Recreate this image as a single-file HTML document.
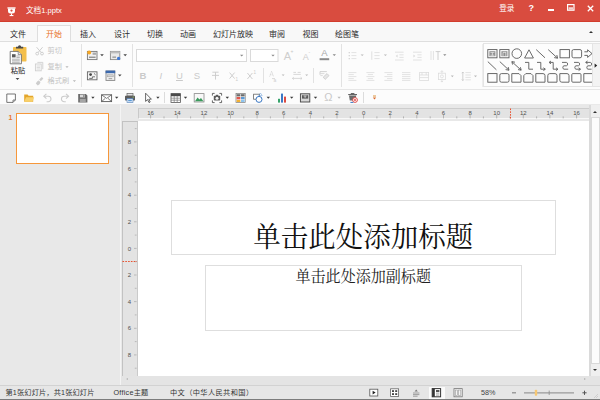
<!DOCTYPE html>
<html lang="zh-CN">
<head>
<meta charset="utf-8">
<title>文档1.pptx</title>
<style>
html,body{margin:0;padding:0;}
body{width:600px;height:400px;overflow:hidden;position:relative;background:#e9e9e9;
 font-family:"Liberation Sans","Noto Sans CJK SC",sans-serif;font-size:7.2px;color:#333;}
.a{position:absolute;}
.t{position:absolute;white-space:nowrap;line-height:10px;height:10px;}
svg{position:absolute;overflow:visible;}
/* title bar */
#titlebar{left:0;top:0;width:600px;height:22px;background:#d94c3f;border-bottom:1px solid #d23d2d;box-sizing:border-box;}
#titlebar .t{color:#fff;}
/* tab row */
#tabrow{left:0;top:22px;width:600px;height:20px;background:#f8f8f8;border-bottom:1px solid #dedede;box-sizing:border-box;}
.tab{position:absolute;top:29.300px;font-size:8px;line-height:12px;height:12px;color:#2b2b2b;white-space:nowrap;}
#acttab{left:37px;top:25px;width:34px;height:17px;background:#fcfcfc;border:1px solid #dedede;border-bottom:none;box-sizing:border-box;}
/* ribbon */
#ribbon{left:0;top:42px;width:600px;height:47px;background:#fcfcfc;}
.vsep{position:absolute;width:1px;background:#e2e2e2;}
.dis{color:#c4c4c4;}
.arr{position:absolute;width:0;height:0;border-left:2px solid transparent;border-right:2px solid transparent;border-top:2px solid #555;}
.arr.l{border-top-color:#c8c8c8;}
/* toolbar */
#toolbar{left:0;top:89px;width:600px;height:16px;background:#fcfcfc;border-top:1px solid #e6e6e6;border-bottom:1px solid #e9e9e9;box-sizing:border-box;}
/* workspace */
#left{left:0;top:105px;width:120px;height:280px;background:#e8e8e8;}
#work{left:121px;top:105px;width:479px;height:280px;background:#e8e8e8;}
#status{left:0;top:385px;width:600px;height:15px;background:#e6e6e6;border-top:1px solid #d2d2d2;box-sizing:border-box;}
</style>
</head>
<body>

<!-- ================= TITLE BAR ================= -->
<div id="titlebar" class="a">
  <svg style="left:7px;top:6.5px" width="9" height="10" viewBox="0 0 9 10">
    <rect x="0.4" y="0.3" width="8.2" height="1.3" fill="#fff"/>
    <path d="M1 1.600h7v2.600a2.400 2.400 0 0 1-2.400 2.400h-2.200a2.400 2.400 0 0 1-2.400-2.400z" fill="#fff"/>
    <circle cx="4.500" cy="3.600" r="1.100" fill="#d94c3f"/>
    <rect x="4" y="6.400" width="1" height="1.800" fill="#fff"/>
    <rect x="2.600" y="8" width="3.800" height="1.100" fill="#fff"/>
  </svg>
  <div class="t" style="left:26px;top:6px;font-size:7.6px;">文档1.pptx</div>
  <div class="t" style="left:499.200px;top:3.600px;font-size:7.600px;">登录</div>
  <div class="t" style="left:528.5px;top:2.5px;font-size:9px;font-weight:bold;">?</div>
  <div class="a" style="left:548px;top:9px;width:6px;height:1.6px;background:#fff;"></div>
  <svg style="left:567px;top:4px" width="8" height="7" viewBox="0 0 8 7">
    <rect x="0.6" y="0.6" width="6.4" height="5.6" fill="none" stroke="#fff" stroke-width="1.2"/>
    <rect x="1.6" y="3.2" width="4.4" height="2.4" fill="#fff" opacity=".75"/>
  </svg>
  <svg style="left:587px;top:4.5px" width="7" height="7" viewBox="0 0 7 7">
    <path d="M0.8 0.8L6.2 6.2M6.2 0.8L0.8 6.2" stroke="#fff" stroke-width="1.3" fill="none"/>
  </svg>
</div>

<!-- ================= TAB ROW ================= -->
<div id="tabrow" class="a"></div>
<div id="acttab" class="a"></div>
<div class="tab" style="left:10px;">文件</div>
<div class="tab" style="left:46px;color:#e8742a;">开始</div>
<div class="tab" style="left:80px;">插入</div>
<div class="tab" style="left:114px;">设计</div>
<div class="tab" style="left:147px;">切换</div>
<div class="tab" style="left:180px;">动画</div>
<div class="tab" style="left:213px;">幻灯片放映</div>
<div class="tab" style="left:269px;">审阅</div>
<div class="tab" style="left:302.5px;">视图</div>
<div class="tab" style="left:335px;">绘图笔</div>
<div class="a" style="left:588.5px;top:30.5px;width:0;height:0;border-left:2.5px solid transparent;border-right:2.5px solid transparent;border-bottom:2.5px solid #333;"></div>

<!-- ================= RIBBON ================= -->
<div id="ribbon" class="a"></div>
<!--RIBBON-START-->
<svg style="left:0;top:41px" width="600" height="48" viewBox="0 41 600 48">
  <!-- paste icon -->
  <rect x="13" y="47" width="13.5" height="14.5" rx="0.8" fill="#f3bf4c"/>
  <path d="M16 48.6v-1.8h2a1.6 1.6 0 0 1 3.2 0h2v1.8z" fill="#4a4a4a"/>
  <path d="M10.2 51.4h8l3.2 3.2v9.2H10.2z" fill="#fff" stroke="#6e6e6e" stroke-width="0.9"/>
  <path d="M18.2 51.4v3.2h3.2" fill="#e9e9e9" stroke="#6e6e6e" stroke-width="0.7"/>
  <rect x="12" y="54.2" width="3.6" height="3.2" fill="#5a5a5a"/>
  <path d="M16.4 56h3.4M16.4 57.6h3.4M12 59.2h7.8M12 60.8h7.8M12 62.3h7.8" stroke="#9a9a9a" stroke-width="0.8"/>
  <!-- scissors (disabled) -->
  <g stroke="#c9c9c9" stroke-width="0.9" fill="none">
    <path d="M36.6 47.2l4.6 5.4M42.6 47.2l-4.6 5.4"/>
    <circle cx="37.2" cy="53.6" r="1.4"/><circle cx="42" cy="53.6" r="1.4"/>
  </g>
  <!-- copy (disabled) -->
  <g stroke="#cfcfcf" stroke-width="0.9" fill="#fbfbfb">
    <path d="M37.4 62.4h5.4v6.8"/>
    <rect x="35.4" y="64" width="5.8" height="6.8"/>
    <path d="M36.6 66h3.4M36.6 67.5h3.4M36.6 69h3.4" stroke-width="0.7"/>
  </g>
  <!-- format brush (disabled) -->
  <g fill="#cdcdcd">
    <path d="M41.8 77l1.6 1.6-2.6 2.6-1.6-1.6z"/>
    <path d="M38.6 80.2l2 2-1 1 .6.6-2.4 1.6-2-2 1.6-2.4.6.6z"/>
  </g>
  <!-- new slide -->
  <rect x="87.4" y="51.4" width="9.6" height="8.2" fill="#f1f1f1" stroke="#777" stroke-width="0.9"/>
  <rect x="92.6" y="52.6" width="3.4" height="2.2" fill="#a9a9a9"/>
  <rect x="89" y="56.6" width="6.6" height="1.3" fill="#8a8a8a"/>
  <circle cx="89.2" cy="52.6" r="2" fill="#f6a724"/>
  <!-- layout -->
  <rect x="110.4" y="51.4" width="9.4" height="8.2" fill="#e9e9e9" stroke="#8a8a8a" stroke-width="0.9"/>
  <rect x="110.4" y="51.4" width="9.4" height="2" fill="#bdbdbd"/>
  <rect x="112.4" y="56.4" width="3.6" height="1.6" fill="#a5a5a5"/>
  <circle cx="118.6" cy="58.4" r="1.6" fill="#3d78d6"/>
  <!-- section / reset -->
  <rect x="87.4" y="71.8" width="9.6" height="8" fill="#f3f3f3" stroke="#666" stroke-width="0.9"/>
  <circle cx="90.6" cy="74.6" r="1.4" fill="#444"/>
  <path d="M89.2 78.4h3.2v-1.6h2.6M94 73.4l1.6 1.4" stroke="#555" stroke-width="0.8" fill="none"/>
  <!-- slide w/ blue header -->
  <rect x="106" y="71" width="8.8" height="9.4" fill="#f0f0f0" stroke="#888" stroke-width="0.9"/>
  <rect x="105.6" y="70.6" width="9.6" height="2.6" fill="#3c69ad"/>
  <rect x="107.6" y="74.8" width="5.6" height="2" fill="#d4d4d4" stroke="#999" stroke-width="0.5"/>
  <rect x="108.6" y="78" width="3.6" height="1.2" fill="#aaa"/>
  <!-- combo boxes -->
  <rect x="136.5" y="49.5" width="110" height="12" fill="#fff" stroke="#dadada" stroke-width="1"/>
  <rect x="250.5" y="49.5" width="27.5" height="12" fill="#fff" stroke="#dadada" stroke-width="1"/>
  <path d="M240 54.8h3.4l-1.7 1.8zM271.3 54.8h3.4l-1.7 1.8z" fill="#8c8c8c"/>
  <!-- strike T -->
  <g stroke="#c9c9c9" stroke-width="0.9" fill="none">
    <path d="M212.4 72.2h6.2M215.5 72.2v7.4M212 75.4h7"/>
    <!-- X sub / sup -->
    <path d="M229.6 72.6l5 6M234.6 72.6l-5 6"/>
    <path d="M247.4 73l5 6M252.4 73l-5 6"/>
  </g>
  <!-- A aa change case -->
  <g stroke="#cfcfcf" stroke-width="0.8" fill="none">
    <path d="M269.6 76.6l2-5.4 2 5.4M270.4 74.8h2.4" stroke-dasharray="1 .6"/>
    <path d="M272 78.6h3"/>
  </g>
  <!-- char spacing -->
  <g stroke="#cfcfcf" stroke-width="0.8" fill="none">
    <path d="M293.4 72.4h2.6M297.6 72.4h3M293.4 74.4h7.4" />
    <path d="M292.4 78.4h9.6M292.4 78.4l1.4-1.2M292.4 78.4l1.4 1.2M302 78.4l-1.4-1.2M302 78.4l-1.4 1.2"/>
  </g>
  <!-- eraser / clear format -->
  <g stroke="#cdcdcd" stroke-width="0.9" fill="none">
    <path d="M320 74.8v-3.2h6.8"/>
    <path d="M320.4 73.6h4M320.4 75.6h2.4" stroke-width="0.7"/>
    <path d="M323.2 77.2l3.8-3.6 2 2-3.8 3.8z" fill="#e6e6e6"/>
  </g>
  <!-- font color bar -->
  <rect x="319.6" y="58.2" width="9.6" height="2" fill="#8a8a8a"/>
  <!-- paragraph row1 : bullets -->
  <g stroke="#dcdcdc" stroke-width="0.8" fill="none">
    <path d="M351.4 52.6h5M351.4 55.6h5M351.4 58.6h5"/>
    <path d="M374.4 52.6h5.2M374.4 55.6h5.2M374.4 58.6h5.2"/>
    <path d="M371.8 51.4v8.4" stroke-width="0.9"/>
    <!-- indent dec / inc -->
    <path d="M395 52.200h8.600M399.400 54.800h4.200M399.400 57.400h4.200M395 60h8.600"/><path d="M397.600 54.600l-2 1.500 2 1.500z" fill="#dcdcdc" stroke="none"/>
    <path d="M413 52.200h8.600M417.400 54.800h4.200M417.400 57.400h4.200M413 60h8.600"/><path d="M413.400 54.600l2 1.500-2 1.500z" fill="#dcdcdc" stroke="none"/>
    <!-- text direction -->
    <path d="M431 51v9M433.4 51v9" />
    <path d="M435.6 51.6h4.8M438 51.6v8.4" stroke="#c4c4c4"/>
    <!-- align row -->
    <path d="M348.4 72.6h8M348.4 74.6h5.4M348.4 76.6h8M348.4 78.6h5.4M348.4 80.4h8"/>
    <path d="M366.4 72.6h8M367.8 74.6h5.2M366.4 76.6h8M367.8 78.6h5.2M366.4 80.4h8"/>
    <path d="M384.4 72.6h8M387 74.6h5.4M384.4 76.6h8M387 78.6h5.4M384.4 80.4h8"/>
    <path d="M402 72.6h8.4M402 74.6h8.4M402 76.6h8.4M402 78.6h8.4M402 80.4h8.4"/>
    <rect x="419.6" y="72.4" width="9" height="8"/>
    <path d="M419.6 75h9M419.6 77.6h9M422 72.4v2.6M426.2 72.4v2.6"/>
    <!-- vertical align -->
    <rect x="438.4" y="73.200" width="7" height="6.400"/>
    <circle cx="441.900" cy="76.400" r="1.500"/>
    <path d="M441.900 70.800v2.400M441.900 79.600v2.400M440.700 71.900l1.200-1.200 1.200 1.200M440.700 80.900l1.200 1.200 1.200-1.200"/>
    <!-- line spacing -->
    <path d="M465.4 72.6h5.4M465.4 75h5.4M465.4 77.4h5.4M465.4 79.8h5.4"/>
    <path d="M462.8 72v8.6M461.8 73.2l1-1.2 1 1.2M461.8 79.4l1 1.2 1-1.2" stroke="#c8c8c8"/>
  </g>
  <g fill="#d8d8d8">
    <rect x="348.6" y="52" width="1.4" height="1.3"/><rect x="348.6" y="55" width="1.4" height="1.3"/><rect x="348.6" y="58" width="1.4" height="1.3"/>
    
  </g>
  <!-- small drop arrows -->
    <g fill="#4a4a4a">
    <path d="M15.6 78h3.8l-1.9 2.1z"/>
    <path d="M100.2 54.2h3.6l-1.8 2zM123.4 54.2h3.6l-1.8 2zM118 74.4h3.6l-1.8 2z"/>
  </g>
  <g fill="#8a8a8a">
    <path d="M332.6 54.2h3.4l-1.7 1.9z"/>
    <path d="M443.2 54.2h3.2l-1.6 1.8z"/>
  </g>
  <g fill="#b9b9b9">
    <path d="M65.4 66.2h3.2l-1.6 1.7zM72.8 80.2h3.2l-1.6 1.7z"/>
    <path d="M281.6 74.4h3l-1.5 1.6zM305.2 74.4h3l-1.5 1.6z"/>
    <path d="M360.6 54.4h3.2l-1.6 1.7zM383.8 54.4h3.2l-1.6 1.7z"/>
    <path d="M450.8 75.6h3l-1.5 1.6zM474 75.6h3l-1.5 1.6z"/>
  </g>
  <!-- shapes gallery -->
  <rect x="483.5" y="43.5" width="109" height="43" fill="#fdfdfd" stroke="#e4e4e4" stroke-width="1"/>
  <rect x="592.5" y="43.5" width="8" height="43" fill="#f3f3f3" stroke="#e4e4e4" stroke-width="1"/>
  <path d="M594.6 63.4l2.6 2.2-2.6 2.2z" fill="#222"/>
  <g stroke="#5a5a5a" stroke-width="0.9" fill="none">
    <!-- row1 -->
    <rect x="487.8" y="49.6" width="9.2" height="8.2"/>
    <rect x="499.8" y="49.6" width="9.2" height="8.2"/>
    <circle cx="516.8" cy="53.6" r="4.8"/>
    <path d="M524.6 58l4.4-8.2 4.4 8.2z"/>
    <path d="M536.2 49.6l8.8 8.2"/>
    <path d="M548.2 49.6l9.2 8.4M557.6 58.2l-3.4-.6M557.6 58.2l-.8-3.2"/>
    <rect x="560" y="49.6" width="9.4" height="8.2"/>
    <rect x="572" y="49.6" width="9.6" height="8.2" rx="1.6"/>
    <path d="M592 51.8h-3.2v-2l-4.4 3.8 4.4 3.8v-2h3.2" transform="translate(1176.4 0) scale(-1 1)"/>
    <!-- row2 -->
    <path d="M487.8 61.6l8.6 8.2"/>
    <path d="M499.8 61.6l9 8.4M509 70.2l-3.4-.6M509 70.2l-.8-3.2"/>
    <path d="M512 61.8l9 8.2M521.2 70.2l-3.2-.6M521.2 70.2l-.8-3M511.8 61.6l3.2.6M511.8 61.6l.8 3"/>
    <path d="M525 62.4h3.8v6.8h4.2"/>
    <path d="M537 62.4h3.8v6.8h4.2M545.4 69.2l-2-1.4M545.4 69.2l-2 1.4"/>
    <path d="M549.6 62.4h3.6v6.8h4.2M558 69.2l-2-1.4M558 69.2l-2 1.4M549 62.4l2-1.4M549 62.4l2 1.4"/>
    <path d="M562 62.4h4.4c1.6 0 1.6 3.4 0 3.4h-2.4c-1.6 0-1.6 3.4 0 3.4h4.2"/>
    <path d="M574 62.4h4.4c1.6 0 1.6 3.4 0 3.4h-2.4c-1.6 0-1.6 3.4 0 3.4h4.2M580.6 69.2l-2-1.4M580.6 69.2l-2 1.4"/>
    <path d="M586 62.4h4.4c1.6 0 1.6 3.4 0 3.4h-2.4c-1.6 0-1.6 3.4 0 3.4h3.6M585.6 62.4l2-1.4M585.6 62.4l2 1.4"/>
    <!-- row3 -->
    <rect x="487.8" y="73.6" width="9.2" height="8.6"/>
    <rect x="499.8" y="73.6" width="9.2" height="8.6" rx="1.6"/>
    <path d="M511.8 73.6h7.2l2 2v6.600h-9.200z"/>
    <path d="M525.800 73.600h5.200l2 2v6.600h-9.200v-6.600z"/>
    <path d="M535.800 73.600h7.200a2 2 0 0 1 2 2v6.600h-9.200z"/>
    <path d="M549.800 73.600h5.200a2 2 0 0 1 2 2v6.600h-9.200v-6.600a2 2 0 0 1 2-2z"/>
    <path d="M559.800 73.600h7.200a2 2 0 0 1 2 2v6.600h-7.200a2 2 0 0 1 -2-2z"/>
    <rect x="571.8" y="73.600" width="9.200" height="8.600" rx="1"/>
    <path d="M592 73.600h-8.200v8.600h8.200"/>
  </g>
  <g fill="#8e8e8e">
    <rect x="489.400" y="51.200" width="6" height="5"/>
    <rect x="501.400" y="51.200" width="6" height="5"/>
  </g>
  <path d="M490.400 52.600h4M492.400 52.600v2.800M490.400 55.200h4" stroke="#fff" stroke-width="0.600" fill="none"/>
  <path d="M503 52.400v3.600M503 52.400h3.200M505.800 52.400v3.600" stroke="#fff" stroke-width="0.600" fill="none"/>
</svg>
<div class="vsep" style="left:81px;top:44px;height:43px;"></div>
<div class="vsep" style="left:132px;top:44px;height:43px;"></div>
<div class="vsep" style="left:262.500px;top:68px;height:15px;"></div>
<div class="vsep" style="left:313px;top:68px;height:15px;"></div>
<div class="vsep" style="left:340.500px;top:44px;height:43px;"></div>
<div class="vsep" style="left:482px;top:44px;height:43px;background:#ededed;"></div>
<div class="t" style="left:10.800px;top:65.500px;color:#222;">粘贴</div>
<div class="t dis" style="left:47.500px;top:46.200px;">剪切</div>
<div class="t dis" style="left:47.500px;top:62px;">复制</div>
<div class="t dis" style="left:47.500px;top:76px;">格式刷</div>
<div class="t" style="left:139.500px;top:70.500px;font-size:9.500px;font-weight:bold;color:#cacaca;">B</div>
<div class="t" style="left:159.500px;top:70.500px;font-size:9.500px;font-style:italic;color:#cacaca;">I</div>
<div class="t" style="left:176px;top:70.500px;font-size:9.500px;color:#cacaca;text-decoration:underline;">U</div>
<div class="t" style="left:193.800px;top:70.500px;font-size:9.500px;color:#cacaca;">S</div>
<div class="t" style="left:235.500px;top:75px;font-size:4.500px;color:#cacaca;">1</div>
<div class="t" style="left:253.500px;top:67.500px;font-size:4.500px;color:#cacaca;">1</div>
<div class="t" style="left:273.400px;top:74.500px;font-size:5px;color:#cfcfcf;">a</div>
<div class="t" style="left:283.800px;top:50.500px;font-size:11px;color:#cecece;">A</div>
<div class="t" style="left:290.600px;top:46.400px;font-size:5px;color:#c6c6c6;">+</div>
<div class="t" style="left:302.800px;top:51.500px;font-size:9px;color:#cecece;">A</div>
<div class="t" style="left:308.600px;top:47.400px;font-size:5px;color:#c6c6c6;">-</div>
<div class="t" style="left:321.200px;top:48.400px;font-size:9.500px;color:#a8a8a8;">A</div>
<!--RIBBON-END-->

<!-- ================= QUICK TOOLBAR ================= -->
<div id="toolbar" class="a"></div>
<!--TOOLBAR-START-->
<svg style="left:0;top:89px" width="600" height="17" viewBox="0 89 600 17">
  <!-- new -->
  <path d="M6.800 94h8.600v6l-2.400 2.400h-6.200z" fill="#fff" stroke="#666" stroke-width="0.900"/>
  <path d="M15.400 100h-2.400v2.400" fill="none" stroke="#666" stroke-width="0.800"/>
  <!-- open folder -->
  <path d="M24.200 101.800v-7.200h3.400l1 1.200h4.600v6z" fill="#e3a52a"/>
  <path d="M24.200 101.800l1.800-4.600h8.200l-1.800 4.600z" fill="#f8d06a"/>
  <!-- undo / redo (disabled) -->
  <g stroke="#cbcbcb" stroke-width="1.100" fill="none">
    <path d="M44.200 96.200h4a2.800 2.800 0 0 1 0 5.600h-1.600"/>
    <path d="M46.400 93.800l-2.600 2.400 2.600 2.400"/>
    <path d="M68.200 96.200h-4a2.800 2.800 0 0 0 0 5.600h1.600"/>
    <path d="M66 93.800l2.600 2.400-2.600 2.400"/>
  </g>
  <!-- save -->
  <path d="M78.200 94h7.600l1.600 1.600v6.800h-9.200z" fill="#6b6b6b"/>
  <rect x="80" y="94.600" width="5" height="2.800" fill="#d9d9d9"/>
  <rect x="83.400" y="95" width="1" height="2" fill="#6b6b6b"/>
  <rect x="79.800" y="98.800" width="6" height="3.200" fill="#a5a5a5"/>
  <!-- envelope -->
  <rect x="101.600" y="94.800" width="10" height="6.800" fill="#fff" stroke="#5a5a5a" stroke-width="0.900"/>
  <path d="M101.600 94.800l5 3.600 5-3.600M101.600 101.600l3.600-3.200M111.600 101.600l-3.600-3.200" fill="none" stroke="#5a5a5a" stroke-width="0.800"/>
  <!-- printer -->
  <rect x="127" y="93.400" width="6" height="2.600" fill="#e6e6e6" stroke="#666" stroke-width="0.700"/>
  <rect x="125" y="95.800" width="10" height="4.600" rx="0.600" fill="#5c5c5c"/>
  <rect x="127" y="98.600" width="6" height="3.800" fill="#dfeaf8" stroke="#4a7ab5" stroke-width="0.600"/><rect x="128.200" y="99.800" width="3.600" height="1.400" fill="#5b9bd5"/>
  <rect x="132.600" y="96.600" width="1.200" height="0.900" fill="#9fd36a"/>
  <!-- cursor -->
  <path d="M145.600 93.200v8.200l2-1.800 1.400 3 1.200-.6-1.400-2.800h2.600z" fill="#fff" stroke="#444" stroke-width="0.800"/>
  <!-- table -->
  <rect x="171" y="93.600" width="9.400" height="8.800" fill="#fff" stroke="#555" stroke-width="0.800"/>
  <rect x="171" y="93.600" width="9.400" height="2.600" fill="#4a4a4a"/>
  <path d="M174.200 96v6.400M177.200 96v6.400M171 98.200h9.400M171 100.200h9.400" stroke="#777" stroke-width="0.700"/>
  <!-- picture -->
  <rect x="194.200" y="93.600" width="9.800" height="8.400" fill="#f8f8f8" stroke="#8a8a8a" stroke-width="0.800"/>
  <path d="M195 101.200l2.600-3.800 1.800 2.200 1.600-1.600 2.400 3.200z" fill="#3a9a5c"/>
  <!-- screenshot -->
  <path d="M212.400 95.600v-2.200h2.200M219.400 93.400h2.200v2.200M221.600 100.400v2.200h-2.200M214.600 102.600h-2.200v-2.200" fill="none" stroke="#555" stroke-width="0.900"/>
  <rect x="213.800" y="95.800" width="6.400" height="4.800" rx="0.800" fill="#5a5a5a"/>
  <rect x="215.800" y="94.800" width="2.400" height="1.200" fill="#5a5a5a"/>
  <circle cx="217" cy="98.200" r="1.500" fill="#f4f4f4"/>
  <!-- colorful grid -->
  <rect x="236" y="93.600" width="9.200" height="8.800" fill="#fff" stroke="#777" stroke-width="0.700"/>
  <rect x="236.600" y="94.200" width="3.800" height="2.200" fill="#6a6a6a"/>
  <rect x="241" y="94.200" width="3.600" height="2.200" fill="#6a6a6a"/>
  <rect x="236.600" y="97" width="3.800" height="2.400" fill="#e2574c"/>
  <rect x="241" y="97" width="3.600" height="2.400" fill="#5b9bd5"/>
  <rect x="236.600" y="100" width="3.800" height="2" fill="#f2b134"/>
  <rect x="241" y="100" width="3.600" height="2" fill="#8cc3ee"/>
  <!-- shapes -->
  <rect x="253.600" y="94.200" width="6" height="5" fill="#fff" stroke="#666" stroke-width="0.800"/>
  <circle cx="259" cy="99.400" r="3" fill="#fff" stroke="#3b78c4" stroke-width="1"/>
  <path d="M260.400 93l1.800 2.600h-3.600z" fill="none" stroke="#7aa7dc" stroke-width="0.600"/>
  <!-- chart -->
  <rect x="278" y="98.800" width="2" height="3.800" fill="#36a36a"/>
  <rect x="281" y="93.600" width="2" height="9" fill="#3b78c4"/>
  <rect x="284" y="96.600" width="2" height="6" fill="#dd4b42"/>
  <!-- text box -->
  <rect x="300.400" y="93.800" width="9.400" height="8.200" fill="#d8d8d8" stroke="#444" stroke-width="0.900"/>
  <rect x="302" y="95.200" width="6.200" height="3.400" fill="#5c5c5c"/>
  <path d="M303.600 96h3M305.100 96v2" stroke="#fff" stroke-width="0.600"/>
  <!-- recycle -->
  <path d="M348.200 94.600h8.800M350.800 93.600h3.600" stroke="#555" stroke-width="1"/>
  <path d="M349 95.400h7.200l-.8 5.200h-5.600z" fill="#6a6a6a"/>
  <circle cx="355" cy="100" r="2.400" fill="#fff" stroke="#dc3b36" stroke-width="0.900"/>
  <circle cx="355" cy="100" r="0.900" fill="#dc3b36"/>
  <path d="M350.400 102.400h3" stroke="#3b78c4" stroke-width="1"/>
  <!-- quick access custom -->
  <path d="M373 96h3" stroke="#d98b2a" stroke-width="0.900"/>
  <path d="M372.800 97.600h3.400l-1.700 2z" fill="#d96a2a"/>
  <!-- arrows -->
  <g fill="#3c3c3c">
    <path d="M91.200 96.800h3.400l-1.700 1.900z"/>
    <path d="M115 96.800h3.400l-1.700 1.900z"/>
    <path d="M156.200 96.800h3.400l-1.700 1.900z"/>
    <path d="M183.800 96.800h3.400l-1.700 1.900z"/>
    <path d="M225.600 96.800h3.400l-1.700 1.900z"/>
    <path d="M266.600 96.800h3.400l-1.700 1.900z"/>
    <path d="M290 96.800h3.400l-1.700 1.900z"/>
    <path d="M313.800 96.800h3.400l-1.700 1.900z"/>
  </g>
  <path d="M337.400 96.800h3.400l-1.700 1.900z" fill="#bdbdbd"/>
</svg>
<div class="vsep" style="left:164px;top:92px;height:11px;background:#dcdcdc;"></div>
<div class="vsep" style="left:363px;top:92px;height:11px;background:#dcdcdc;"></div>
<div class="t" style="left:324.200px;top:92.400px;font-size:11px;color:#c9c9c9;">Ω</div>
<!--TOOLBAR-END-->

<!-- ================= WORKSPACE ================= -->
<div id="left" class="a"></div>
<div class="a" style="left:120px;top:105px;width:1px;height:280px;background:#f4f4f4;"></div>
<div id="work" class="a"></div>
<!--WORK-START-->
<!-- thumbnail -->
<div class="t" style="left:8.600px;top:112.500px;font-size:7px;font-weight:bold;color:#e8742a;">1</div>
<div class="a" style="left:16px;top:113px;width:92.800px;height:50.800px;box-sizing:border-box;border:1.400px solid #f6973a;background:#fff;"></div>
<!-- horizontal ruler -->
<div class="a" id="hruler" style="left:137.500px;top:108px;width:451.500px;height:11px;background:#e3e3e3;border-top:1px solid #cdcdcd;border-left:1px solid #c9c9c9;border-bottom:1px solid #f8f8f8;box-sizing:border-box;"></div>
<!-- vertical ruler -->
<div class="a" id="vruler" style="left:122px;top:121px;width:15.500px;height:255px;background:#e3e3e3;border-left:1px solid #c2c2c2;border-top:1px solid #c2c2c2;border-right:1px solid #cacaca;box-sizing:border-box;"></div>
<!--RULER-START-->
<svg style="left:0;top:105px" width="600" height="280" viewBox="0 105 600 280" font-family="Liberation Sans, sans-serif" font-size="6" fill="#505050" text-anchor="middle">
<path d="M150.6 115.0v3.4M164.0 116.4v2.0M177.3 115.0v3.4M190.6 116.4v2.0M203.9 115.0v3.4M217.2 116.4v2.0M230.5 115.0v3.4M243.8 116.4v2.0M257.1 115.0v3.4M270.4 116.4v2.0M283.7 115.0v3.4M297.1 116.4v2.0M310.4 115.0v3.4M323.7 116.4v2.0M337.0 115.0v3.4M350.3 116.4v2.0M363.6 115.0v3.4M376.9 116.4v2.0M390.2 115.0v3.4M403.5 116.4v2.0M416.8 115.0v3.4M430.2 116.4v2.0M443.5 115.0v3.4M456.8 116.4v2.0M470.1 115.0v3.4M483.4 116.4v2.0M496.7 115.0v3.4M510.0 116.4v2.0M523.3 115.0v3.4M536.6 116.4v2.0M549.9 115.0v3.4M563.2 116.4v2.0M576.6 115.0v3.4" stroke="#9c9c9c" stroke-width="0.7" fill="none"/>
<text x="150.6" y="114.7">16</text>
<text x="177.3" y="114.7">14</text>
<text x="203.9" y="114.7">12</text>
<text x="230.5" y="114.7">10</text>
<text x="257.1" y="114.7">8</text>
<text x="283.7" y="114.7">6</text>
<text x="310.4" y="114.7">4</text>
<text x="337.0" y="114.7">2</text>
<text x="363.6" y="114.7">0</text>
<text x="390.2" y="114.7">2</text>
<text x="416.8" y="114.7">4</text>
<text x="443.5" y="114.7">6</text>
<text x="470.1" y="114.7">8</text>
<text x="496.7" y="114.7">10</text>
<text x="523.3" y="114.7">12</text>
<text x="549.9" y="114.7">14</text>
<text x="576.6" y="114.7">16</text>
<path d="M134.8 128.6h1.8M134.0 141.9h2.6M134.8 155.2h1.8M134.0 168.5h2.6M134.8 181.9h1.8M134.0 195.2h2.6M134.8 208.5h1.8M134.0 221.8h2.6M134.8 235.1h1.8M134.0 248.4h2.6M134.8 261.7h1.8M134.0 275.0h2.6M134.8 288.3h1.8M134.0 301.6h2.6M134.8 314.9h1.8M134.0 328.3h2.6M134.8 341.6h1.8M134.0 354.9h2.6M134.8 368.2h1.8" stroke="#a6a6a6" stroke-width="0.7" fill="none"/>
<text x="129.4" y="144.0">8</text>
<text x="129.4" y="170.6">6</text>
<text x="129.4" y="197.3">4</text>
<text x="129.4" y="223.9">2</text>
<text x="129.4" y="250.5">0</text>
<text x="129.4" y="277.1">2</text>
<text x="129.4" y="303.7">4</text>
<text x="129.4" y="330.4">6</text>
<text x="129.4" y="357.0">8</text>
<path d="M510.5 108.5v10" stroke="#e8502e" stroke-width="1" stroke-dasharray="1.6 1.2" fill="none"/>
<path d="M122.5 261.5h14.5" stroke="#e8502e" stroke-width="1" stroke-dasharray="1.6 1.2" fill="none"/>
</svg>
<!--RULER-END-->
<!-- slide -->
<div class="a" id="slide" style="left:138px;top:121px;width:451px;height:255px;background:#fff;"></div>
<div class="a" style="left:170.500px;top:200px;width:385.500px;height:54.500px;box-sizing:border-box;border:1px solid #dedede;"></div>
<div class="a" style="left:205px;top:265px;width:316.500px;height:65.500px;box-sizing:border-box;border:1px solid #dedede;"></div>
<div class="a" id="ttl" style="left:170.500px;top:219.600px;width:385.500px;text-align:center;font-family:'Liberation Serif','Noto Serif CJK SC',serif;font-size:27.500px;line-height:36px;transform:scaleY(1.05);color:#111;white-space:nowrap;">单击此处添加标题</div>
<div class="a" id="sub" style="left:205px;top:266.700px;width:316.500px;text-align:center;font-family:'Liberation Serif','Noto Serif CJK SC',serif;font-size:15.050px;line-height:21px;transform:scaleY(1.08);color:#222;white-space:nowrap;">单击此处添加副标题</div>
<!-- v scrollbar -->
<div class="a" style="left:589px;top:105px;width:1.500px;height:271px;background:#dadada;"></div>
<div class="a" style="left:590.500px;top:105px;width:9.500px;height:271px;background:#efefef;"></div>
<div class="a" style="left:591px;top:116.500px;width:8.500px;height:247px;background:#fcfcfc;border:1px solid #d9d9d9;box-sizing:border-box;"></div>
<div class="a" style="left:593px;top:110.500px;width:0;height:0;border-left:2.200px solid transparent;border-right:2.200px solid transparent;border-bottom:2.800px solid #333;"></div>
<div class="a" style="left:593px;top:368.500px;width:0;height:0;border-left:2.200px solid transparent;border-right:2.200px solid transparent;border-top:2.800px solid #333;"></div>
<!-- h scrollbar -->
<div class="a" style="left:121px;top:376px;width:479px;height:9px;background:#e4e4e4;"></div>
<div class="a" style="left:125.500px;top:378.300px;width:0;height:0;border-top:1.800px solid transparent;border-bottom:1.800px solid transparent;border-right:2.200px solid #b5b5b5;"></div>
<div class="a" style="left:584px;top:378.300px;width:0;height:0;border-top:1.800px solid transparent;border-bottom:1.800px solid transparent;border-left:2.200px solid #b5b5b5;"></div>
<!--WORK-END-->

<!-- ================= STATUS BAR ================= -->
<div id="status" class="a"></div>
<!--STATUS-START-->
<div class="t" style="left:5.500px;top:387.500px;color:#333;letter-spacing:0.150px;">第1张幻灯片，共1张幻灯片</div>
<div class="t" style="left:113.500px;top:387.500px;color:#333;letter-spacing:0.25px;">Office主题</div>
<div class="t" style="left:170px;top:387.500px;color:#333;letter-spacing:0.400px;">中文（中华人民共和国）</div>
<div class="t" style="left:481px;top:387.500px;color:#444;">58%</div>
<div class="a" style="left:428.500px;top:386.500px;width:16px;height:12.500px;background:#fafafa;"></div>
<svg style="left:0;top:385px" width="600" height="15" viewBox="0 385 600 15">
  <!-- play -->
  <rect x="369.800" y="389.200" width="8" height="6.800" fill="#fff" stroke="#555" stroke-width="0.800"/>
  <path d="M372.600 390.800l3 1.800-3 1.800z" fill="#222"/>
  <!-- sorter -->
  <rect x="390.600" y="388.800" width="8" height="7.600" fill="#fff" stroke="#666" stroke-width="0.800"/>
  <rect x="392" y="390.200" width="2" height="1.800" fill="#444"/><rect x="395.200" y="390.200" width="2" height="1.800" fill="#444"/>
  <rect x="392" y="393.200" width="2" height="1.800" fill="#444"/><rect x="395.200" y="393.200" width="2" height="1.800" fill="#444"/>
  <!-- notes -->
  <path d="M413 393h6.400M413 394.600h6.400M413 396.200h4.600" stroke="#8a8a8a" stroke-width="0.800"/>
  <path d="M414.600 391.400l1.600-1.800 1.600 1.800z" fill="#777"/>
  <!-- normal (active) -->
  <rect x="432.200" y="388.600" width="8.400" height="8.200" fill="#fff" stroke="#333" stroke-width="1"/>
  <rect x="432.200" y="388.600" width="2.600" height="8.200" fill="#333"/>
  <rect x="436" y="390" width="3.400" height="2.200" fill="#555"/>
  <path d="M436 393.800h3.400M436 395.200h3.400" stroke="#777" stroke-width="0.600"/>
  <!-- reading -->
  <rect x="454" y="388.600" width="8.200" height="8.200" fill="#f4f4f4" stroke="#777" stroke-width="0.800"/>
  <rect x="455.400" y="390" width="2.200" height="5.400" fill="none" stroke="#999" stroke-width="0.600"/>
  <rect x="458.600" y="390" width="2.200" height="5.400" fill="none" stroke="#999" stroke-width="0.600"/>
  <!-- zoom slider -->
  <path d="M512 392.800h4" stroke="#8a8a8a" stroke-width="1.200"/>
  <path d="M524 392.800h50" stroke="#9a9a9a" stroke-width="1.200"/>
  <path d="M549.200 390.600v4.400" stroke="#8a8a8a" stroke-width="0.800"/>
  <rect x="534.800" y="389.800" width="2.400" height="6" rx="0.800" fill="#f7c873"/>
  <path d="M582.400 392.800h4.200M584.500 390.700v4.200" stroke="#555" stroke-width="1"/>
  <path d="M594 398l4-4M596 398l2-2" stroke="#c4c4c4" stroke-width="0.700"/>
</svg>
<div class="a" style="left:0;top:398.500px;width:600px;height:1.500px;background:#7c7c7c;"></div>
<!--STATUS-END-->

</body>
</html>
